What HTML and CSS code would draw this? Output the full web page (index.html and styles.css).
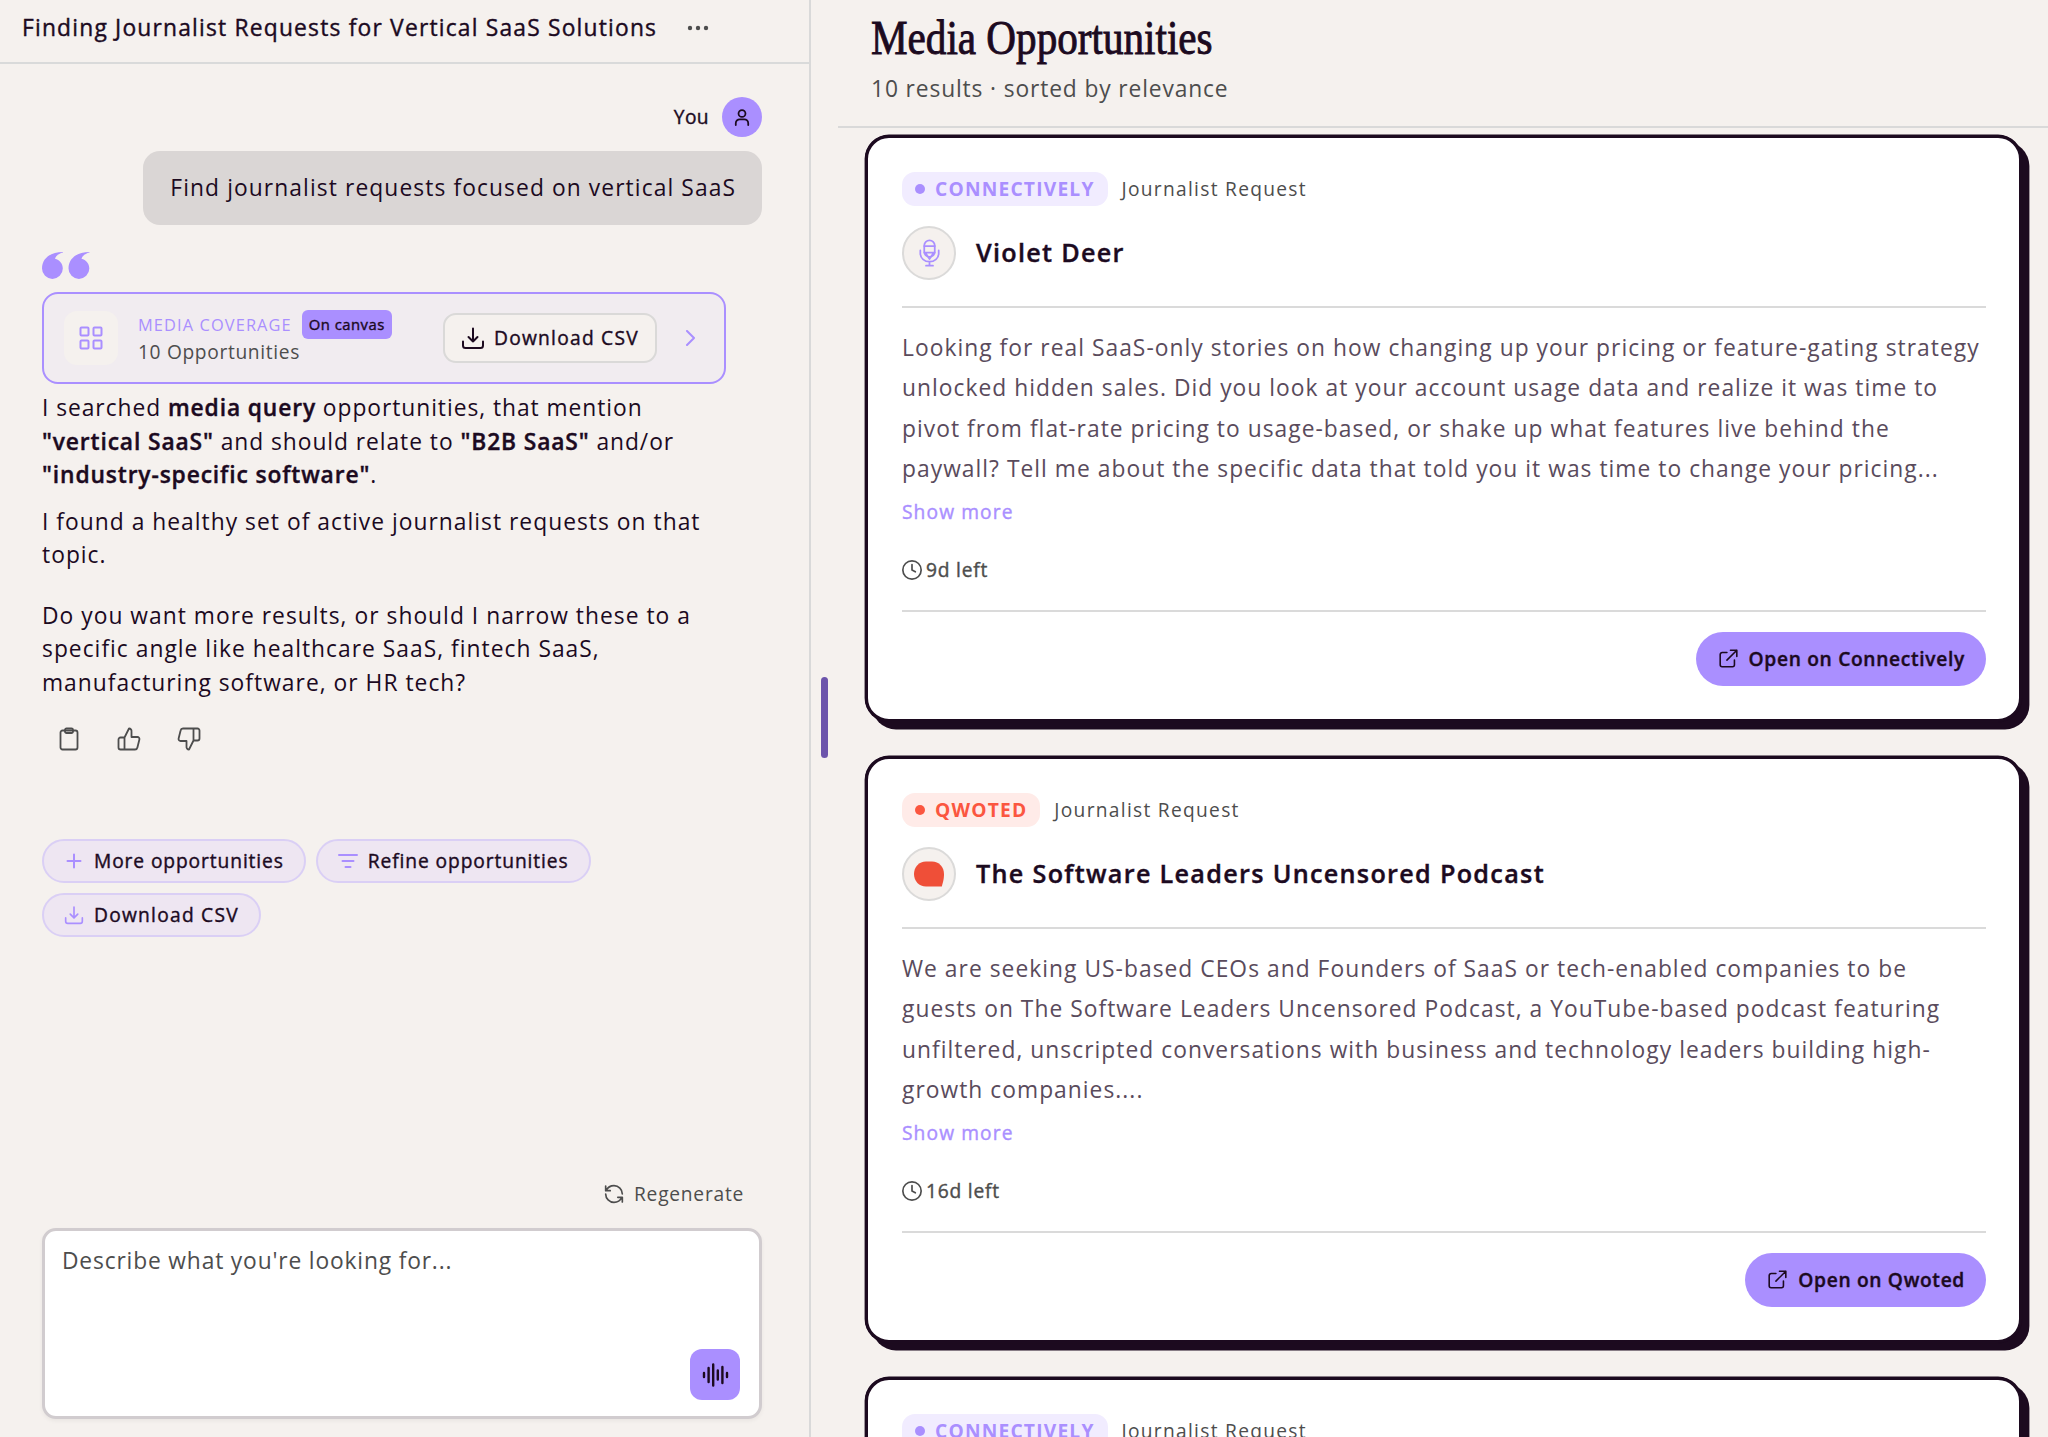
FILE: index.html
```
<!DOCTYPE html>
<html lang="en">
<head>
    <meta charset="UTF-8">
    <meta name="viewport" content="width=device-width, initial-scale=1.0">
    <title>Media Opportunities</title>
    <link rel="stylesheet" href="styles.css">
</head>
<body>
    <!-- Shared icons -->
    <svg class="sprite">
        <symbol id="icon-download" viewBox="0 0 24 24"><path d="M12 2.5v13M7.5 11l4.5 4.5 4.5-4.5M2 15.5v4A2.5 2.5 0 0 0 4.5 22h15a2.5 2.5 0 0 0 2.5-2.5v-4"/></symbol>
        <symbol id="icon-external" viewBox="0 0 24 24"><path d="M10 4.5H4A2.5 2.5 0 0 0 1.5 7v13A2.5 2.5 0 0 0 4 22.5h13a2.5 2.5 0 0 0 2.5-2.5v-6M14.500 1.500h8v8M22.500 1.500 10 14"/></symbol>
        <symbol id="icon-clock" viewBox="0 0 24 24"><circle cx="12" cy="12" r="11"/><path d="M12 5.5V12l4 2.2"/></symbol>
        <symbol id="icon-mic" viewBox="0 0 24 32"><rect x="6" y="1.5" width="12" height="19" rx="6"/><path d="M6 8h12M6 15.5h12M7.5 16l4.5 7 4.5-7M1.500 13v3.500a10.500 9.500 0 0 0 21 0V13M12 26v4.500M8 30.500h8"/></symbol>
    </svg>

    <main class="app">
        <section class="chat">
            <header class="chat-header">
                <h2 class="chat-title">Finding Journalist Requests for Vertical SaaS Solutions</h2>
                <svg class="menu-dots" viewBox="0 0 22 6"><circle cx="3" cy="3" r="2.2"/><circle cx="11" cy="3" r="2.2"/><circle cx="19" cy="3" r="2.2"/></svg>
            </header>

            <div class="chat-body">
                <div class="user-row">
                    <span class="user-name">You</span>
                    <span class="user-avatar">
                        <svg class="icon" width="16" height="19" viewBox="0 0 18 20"><circle cx="9" cy="5.5" r="3.9"/><path d="M2 18.500v-2a4.500 4.500 0 0 1 4.500-4.500h5a4.500 4.500 0 0 1 4.500 4.500v2"/></svg>
                    </span>
                </div>
                <div class="user-bubble">Find journalist requests focused on vertical SaaS</div>

                <svg class="quote-mark" viewBox="0 0 48 27"><path d="M21 0C9 0 0 6 0 16.500a10.400 10.400 0 0 0 20.800 0c0-5-3.300-8.600-7.800-9.800C14 3.500 17 1.500 21 .5zM47.500 0C35.500 0 26.500 6 26.500 16.500a10.400 10.400 0 0 0 20.800 0c0-5-3.300-8.600-7.800-9.800C40.500 3.500 43.500 1.500 47.500.5z"/></svg>

                <div class="canvas-card">
                    <span class="canvas-icon">
                        <svg class="icon" width="24" height="24" viewBox="0 0 24 24"><rect x="1.5" y="1.5" width="8" height="8" rx="1"/><rect x="14.5" y="1.5" width="8" height="8" rx="1"/><rect x="1.5" y="14.5" width="8" height="8" rx="1"/><rect x="14.5" y="14.5" width="8" height="8" rx="1"/></svg>
                    </span>
                    <div class="canvas-info">
                        <div class="canvas-top">
                            <span class="canvas-label">MEDIA COVERAGE</span>
                            <span class="canvas-badge">On canvas</span>
                        </div>
                        <div class="canvas-count">10 Opportunities</div>
                    </div>
                    <button class="download-btn">
                        <svg class="icon" width="24" height="24"><use href="#icon-download"/></svg>
                        Download CSV
                    </button>
                    <svg class="icon chevron" width="11" height="16" viewBox="0 0 11 16"><path d="M2 1l7 7-7 7"/></svg>
                </div>

                <div class="answer">
                    <p>I searched <b>media query</b> opportunities, that mention<br><b>"vertical SaaS"</b> and should relate to <b>"B2B SaaS"</b> and/or<br><b>"industry-specific software"</b>.</p>
                    <p>I found a healthy set of active journalist requests on that<br>topic.</p>
                    <p class="question">Do you want more results, or should I narrow these to a<br>specific angle like healthcare SaaS, fintech SaaS,<br>manufacturing software, or HR tech?</p>
                </div>

                <div class="feedback">
                    <svg class="icon" width="24" height="24" viewBox="0 0 24 24"><rect x="3.5" y="3.5" width="17" height="19" rx="2"/><rect x="8" y="1.5" width="8" height="4.5" rx="1.5"/></svg>
                    <svg class="icon" width="24" height="24" viewBox="0 0 24 24"><path d="M7.500 10.500v12M7.500 10.500H3.500a2 2 0 0 0-2 2v8a2 2 0 0 0 2 2h14.500a2.500 2.500 0 0 0 2.400-2l2-8a2 2 0 0 0-2-2.500H14.500V4.500a2.600 2.600 0 0 0-2.500-3z"/></svg>
                    <svg class="icon" width="24" height="24" viewBox="0 0 24 24"><path d="M16.500 13.500v-12M16.500 13.500h4a2 2 0 0 0 2-2v-8a2 2 0 0 0-2-2H6a2.500 2.500 0 0 0-2.400 2l-2 8a2 2 0 0 0 2 2.500H9.500v5.500a2.600 2.600 0 0 0 2.500 3z"/></svg>
                </div>

                <div class="chips">
                    <button class="chip"><svg class="icon" width="20" height="20" viewBox="0 0 20 20"><path d="M10 3.5v13M3.5 10h13"/></svg>More opportunities</button>
                    <button class="chip"><svg class="icon" width="20" height="20" viewBox="0 0 20 20"><path d="M1 4h18M4.5 10h11M7.5 16h5"/></svg>Refine opportunities</button>
                    <button class="chip"><svg class="icon" width="20" height="20"><use href="#icon-download"/></svg>Download CSV</button>
                </div>
            </div>

            <footer class="composer">
                <div class="regenerate">
                    <svg class="icon" width="20" height="20" viewBox="0 0 24 24"><path d="M2 2.500V8h5.500M2.500 8C4.500 4 8 2 12 2c5.500 0 10 4.500 10 10M22 21.500V16h-5.500M21.500 16c-2 4-5.500 6-9.500 6C6.500 22 2 17.500 2 12"/></svg>
                    Regenerate
                </div>
                <div class="prompt-box">
                    <div class="prompt-text">Describe what you're looking for...</div>
                    <button class="voice-btn">
                        <svg class="icon" width="27" height="24" viewBox="0 0 27 24"><path d="M2 10v4M6.600 5v14M11.200 1.500v21M15.800 7.500v9M20.400 4v16M25 10v4"/></svg>
                    </button>
                </div>
            </footer>
        </section>

        <div class="resizer"><span class="resizer-handle"></span></div>

        <section class="results">
            <header class="results-header">
                <h1 class="results-title">Media Opportunities</h1>
                <p class="results-sub">10 results · sorted by relevance</p>
            </header>

            <div class="cards">
                <article class="card">
                    <div class="card-source">
                        <span class="source-badge">CONNECTIVELY</span>
                        <span class="source-type">Journalist Request</span>
                    </div>
                    <div class="card-head">
                        <span class="outlet"><svg class="icon" width="21" height="32"><use href="#icon-mic"/></svg></span>
                        <h3 class="card-title">Violet Deer</h3>
                    </div>
                    <p class="card-text">Looking for real SaaS-only stories on how changing up your pricing or feature-gating strategy<br>unlocked hidden sales. Did you look at your account usage data and realize it was time to<br>pivot from flat-rate pricing to usage-based, or shake up what features live behind the<br>paywall? Tell me about the specific data that told you it was time to change your pricing...</p>
                    <a class="show-more">Show more</a>
                    <div class="deadline"><svg class="icon" width="20" height="20"><use href="#icon-clock"/></svg>9d left</div>
                    <div class="card-actions">
                        <button class="open-btn"><svg class="icon" width="19" height="19"><use href="#icon-external"/></svg>Open on Connectively</button>
                    </div>
                </article>

                <article class="card">
                    <div class="card-source">
                        <span class="source-badge qwoted">QWOTED</span>
                        <span class="source-type">Journalist Request</span>
                    </div>
                    <div class="card-head">
                        <span class="outlet"><svg width="32" height="26" viewBox="0 0 32 26"><path fill="#ef4f38" d="M13 .5h6c7 0 12 5.500 12 12.500 0 3-.3 5-1 8l-1.200 4.500H13C6 25.500 1 20 1 13S6 .5 13 .5z"/></svg></span>
                        <h3 class="card-title">The Software Leaders Uncensored Podcast</h3>
                    </div>
                    <p class="card-text">We are seeking US-based CEOs and Founders of SaaS or tech-enabled companies to be<br>guests on The Software Leaders Uncensored Podcast, a YouTube-based podcast featuring<br>unfiltered, unscripted conversations with business and technology leaders building high-<br>growth companies....</p>
                    <a class="show-more">Show more</a>
                    <div class="deadline"><svg class="icon" width="20" height="20"><use href="#icon-clock"/></svg>16d left</div>
                    <div class="card-actions">
                        <button class="open-btn"><svg class="icon" width="19" height="19"><use href="#icon-external"/></svg>Open on Qwoted</button>
                    </div>
                </article>

                <article class="card">
                    <div class="card-source">
                        <span class="source-badge">CONNECTIVELY</span>
                        <span class="source-type">Journalist Request</span>
                    </div>
                </article>
            </div>
        </section>
    </main>
</body>
</html>
```
FILE: styles.css
```
* {
    box-sizing: border-box;
}

body {
    margin: 0;
    font-family: "Open Sans", "Noto Sans", sans-serif;
    font-size: 22.8px;
    letter-spacing: 1.02px;
    color: #1c0a1f;
    background-color: #f5f1ee;
    overflow: hidden;
}

h1, h2, h3, p {
    margin: 0;
}

button {
    font: inherit;
    letter-spacing: inherit;
    color: inherit;
    border: none;
    padding: 0;
    display: flex;
    align-items: center;
    white-space: nowrap;
}

/* Medium weight: the regular face, slightly thickened */
.chat-title,
.user-name,
.canvas-badge,
.download-btn,
.chip,
.show-more,
.deadline,
.card-title,
.open-btn,
.answer b {
    -webkit-text-stroke: 0.4px currentColor;
}

.sprite {
    display: none;
}

.icon {
    fill: none;
    stroke: currentColor;
    stroke-width: 2;
    stroke-linecap: round;
    stroke-linejoin: round;
    flex-shrink: 0;
}

.app {
    display: flex;
    height: 1437px;
}

/* Chat column */
.chat {
    width: 811px;
    border-right: 2px solid #d9d9d9;
    display: flex;
    flex-direction: column;
    flex-shrink: 0;
}

.chat-header {
    height: 64px;
    padding: 0 0 7px 22px;
    border-bottom: 2px solid #d9dada;
    display: flex;
    align-items: center;
    gap: 30px;
}

.chat-title {
    font-size: 22.8px;
    font-weight: 400;
    letter-spacing: 1.2px;
    white-space: nowrap;
}

.menu-dots {
    width: 22px;
    height: 6px;
    fill: #4d4d4d;
}

.chat-body {
    flex: 1;
    padding: 33px 47px 0 42px;
    display: flex;
    flex-direction: column;
    align-items: flex-start;
}

.user-row {
    align-self: flex-end;
    display: flex;
    align-items: center;
    gap: 13px;
}

.user-name {
    font-size: 19.2px;
    letter-spacing: 0.4px;
    margin-top: -1px;
}

.user-avatar {
    width: 40px;
    height: 40px;
    border-radius: 50%;
    background-color: #aa8fff;
    display: flex;
    align-items: center;
    justify-content: center;
}

.user-bubble {
    align-self: flex-end;
    margin-top: 14px;
    height: 74px;
    padding: 0 26px 0 27px;
    line-height: 73px;
    border-radius: 17px;
    background-color: #dad6d5;
    letter-spacing: 1.09px;
}

.quote-mark {
    width: 48px;
    height: 27px;
    margin: 27px 0 13px;
    fill: #aa8fff;
}

.canvas-card {
    width: 684px;
    height: 92px;
    padding: 0 27px 1px 20px;
    border: 2px solid #aa8fff;
    border-radius: 16px;
    background-color: #f1ecf0;
    display: flex;
    align-items: center;
}

.canvas-icon {
    width: 54px;
    height: 54px;
    border-radius: 13px;
    background-color: #f5f1ee;
    color: #aa8fff;
    display: flex;
    align-items: center;
    justify-content: center;
}

.canvas-info {
    flex: 1;
    margin-left: 20px;
}

.canvas-top {
    display: flex;
    align-items: center;
    gap: 10px;
}

.canvas-label {
    font-size: 16.4px;
    letter-spacing: 1.1px;
    color: #aa8fff;
}

.canvas-badge {
    height: 29px;
    padding: 0 7px;
    line-height: 28px;
    font-size: 14.8px;
    letter-spacing: 0.5px;
    border-radius: 6px;
    background-color: #aa8fff;
}

.canvas-count {
    font-size: 19.2px;
    line-height: 26px;
    letter-spacing: 0.65px;
    color: #4d4d4d;
}

.download-btn {
    width: 214px;
    height: 50px;
    padding-left: 16px;
    gap: 9px;
    font-size: 19.2px;
    letter-spacing: 1.25px;
    border: 2px solid #dad9d8;
    border-radius: 13px;
    background-color: #f5f1ee;
}

.chevron {
    margin: 0 1px 0 28px;
    color: #aa8fff;
}

.answer {
    margin-top: 7px;
    line-height: 33.5px;
    white-space: nowrap;
}

.answer p {
    margin-bottom: 13px;
}

.answer p:first-child {
    letter-spacing: 0.95px;
}

.answer b {
    font-weight: 600;
    letter-spacing: 0.87px;
}

.answer .question {
    margin: 27px 0 0;
}

.feedback {
    margin: 28px 0 0 15px;
    display: flex;
    gap: 36px;
    color: #4d4d4d;
}

.feedback .icon {
    stroke-width: 1.8;
}

.chips {
    margin-top: 88px;
    display: flex;
    flex-wrap: wrap;
    gap: 10px;
}

.chip {
    height: 44px;
    padding: 0 20px 1px 20px;
    gap: 10px;
    font-size: 19.2px;
    letter-spacing: 0.9px;
    border: 2px solid #dacff5;
    border-radius: 22px;
    background-color: #eee6f2;
}

.chip:last-child {
    letter-spacing: 1.25px;
}

.chip .icon {
    color: #aa8fff;
}

.composer {
    padding: 0 47px 18px 42px;
}

.regenerate {
    display: flex;
    align-items: center;
    justify-content: flex-end;
    gap: 10px;
    margin: 0 18px 20px 0;
    font-size: 19.2px;
    line-height: 28px;
    letter-spacing: 0.75px;
    color: #4d4d4d;
}

.prompt-box {
    height: 191px;
    padding: 13px 19px 16px 17px;
    border: 3px solid #d1cccf;
    border-radius: 14px;
    background-color: #fff;
    box-shadow: 0 2px 4px rgba(0, 0, 0, 0.05);
    display: flex;
    flex-direction: column;
    justify-content: space-between;
}

.prompt-text {
    line-height: 34px;
    letter-spacing: 0.83px;
    color: #4d4d4d;
}

.voice-btn {
    width: 50px;
    height: 51px;
    align-self: flex-end;
    justify-content: center;
    border-radius: 12px;
    background-color: #aa8fff;
}

.voice-btn .icon {
    stroke-width: 2.4;
}

/* Drag handle between the columns */
.resizer {
    width: 27px;
    padding: 0 0 2px 10px;
    display: flex;
    align-items: center;
    flex-shrink: 0;
}

.resizer-handle {
    width: 7px;
    height: 81px;
    border-radius: 4px;
    background-color: #6c54ab;
}

/* Results column */
.results {
    flex: 1;
    height: 1437px;
    overflow: hidden;
}

.results-header {
    height: 128px;
    padding: 9px 0 0 33px;
    border-bottom: 2px solid #d9d9d9;
}

.results-title {
    font-family: "Liberation Serif", serif;
    font-size: 48px;
    font-weight: 400;
    line-height: 58px;
    letter-spacing: 0;
    white-space: nowrap;
    transform: scaleX(0.857);
    transform-origin: left;
    -webkit-text-stroke: 0.9px #1c0a1f;
}

.results-sub {
    line-height: 43px;
    letter-spacing: 0.86px;
    color: #4d4d4d;
}

.cards {
    padding: 7px 26px 0 27px;
    display: flex;
    flex-direction: column;
    gap: 34px;
}

.card {
    height: 587px;
    padding: 34px 33px 0 34px;
    flex-shrink: 0;
    border: 3px solid #1c0a1f;
    border-radius: 24px;
    background-color: #fff;
    box-shadow: 0 0 0 0.4px #1c0a1f, 7px 7px 0 0.4px #1c0a1f;
}

.card-source {
    display: flex;
    align-items: center;
    gap: 14px;
}

.source-badge {
    height: 34px;
    padding: 0 13px 1px 13px;
    display: flex;
    align-items: center;
    gap: 10px;
    font-size: 19.2px;
    font-weight: 700;
    letter-spacing: 1.2px;
    border-radius: 13px;
    color: #aa8fff;
    background-color: #f1ecff;
}

.source-badge::before {
    content: "";
    width: 10px;
    height: 10px;
    border-radius: 50%;
    background-color: currentColor;
}

.source-badge.qwoted {
    color: #fb5640;
    background-color: #ffebe8;
}

.source-type {
    font-size: 19.2px;
    margin-top: -2px;
    letter-spacing: 1.28px;
    color: #4d4d4d;
}

.card-head {
    margin-top: 20px;
    padding-bottom: 26px;
    border-bottom: 2px solid #dadada;
    display: flex;
    align-items: center;
    gap: 20px;
}

.outlet {
    width: 54px;
    height: 54px;
    border: 2px solid #dbdad9;
    border-radius: 50%;
    background-color: #f5f1ee;
    color: #aa8fff;
    display: flex;
    align-items: center;
    justify-content: center;
}

.card-title {
    font-size: 25.2px;
    font-weight: 600;
    margin-top: -2px;
    letter-spacing: 1.3px;
}

.card-text {
    margin-top: 20px;
    line-height: 40.3px;
    letter-spacing: 1.03px;
    white-space: nowrap;
    color: #5a4b5c;
}

.show-more {
    display: block;
    margin-top: 8px;
    font-size: 19.2px;
    line-height: 30px;
    letter-spacing: 1.1px;
    color: #aa8fff;
}

.deadline {
    display: flex;
    align-items: center;
    gap: 4px;
    margin-top: 28px;
    padding-bottom: 25px;
    border-bottom: 2px solid #dadada;
    font-size: 19.2px;
    line-height: 30px;
    letter-spacing: 0.8px;
    color: #4d4d4d;
}

.card-actions {
    display: flex;
    justify-content: flex-end;
    margin-top: 20px;
}

.open-btn {
    height: 54px;
    padding: 0 21px 2px 23px;
    gap: 11px;
    font-size: 19.2px;
    font-weight: 600;
    letter-spacing: 0.68px;
    border-radius: 27px;
    background-color: #aa8fff;
}
```
